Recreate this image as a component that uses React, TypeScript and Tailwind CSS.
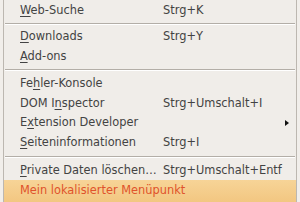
import { ReactNode } from 'react';

type Item =
  | { kind: 'sep'; h: string }
  | { kind: 'item'; label: ReactNode; shortcut?: string; submenu?: boolean; active?: boolean };

const u = (c: string) => <span className="underline underline-offset-[2px]">{c}</span>;

const items: Item[] = [
  { kind: 'item', label: <>{u('W')}eb-Suche</>, shortcut: 'Strg+K' },
  { kind: 'sep', h: 'h-[6px]' },
  { kind: 'item', label: <>{u('D')}ownloads</>, shortcut: 'Strg+Y' },
  { kind: 'item', label: <>{u('A')}dd-ons</> },
  { kind: 'sep', h: 'h-[7px]' },
  { kind: 'item', label: <>Fe{u('h')}ler-Konsole</> },
  { kind: 'item', label: <>DOM I{u('n')}spector</>, shortcut: 'Strg+Umschalt+I' },
  { kind: 'item', label: <>E{u('x')}tension Developer</>, submenu: true },
  { kind: 'item', label: <>{u('S')}eiteninformationen</>, shortcut: 'Strg+I' },
  { kind: 'sep', h: 'h-[8px]' },
  { kind: 'item', label: <>{u('P')}rivate Daten löschen…</>, shortcut: 'Strg+Umschalt+Entf' },
  { kind: 'item', label: 'Mein lokalisierter Menüpunkt', active: true },
];

function Row({ item }: { item: Extract<Item, { kind: 'item' }> }) {
  return (
    <div
      className={
        'flex items-center pl-[16px] pr-[4px] ' +
        (item.active
          ? 'h-[23px] pb-[2px] bg-gradient-to-b from-[#f7d497] to-[#f2c680] text-[#e0532b]'
          : 'h-[19.8px] text-[#434343]')
      }
    >
      <span className="w-[143px] whitespace-nowrap">{item.label}</span>
      <span className="flex-1 whitespace-nowrap">{item.shortcut}</span>
      {item.submenu && (
        <svg width="4" height="6" viewBox="0 0 4 6" className="mr-[3px]">
          <path d="M0 0 L4 3 L0 6 Z" fill="#111" />
        </svg>
      )}
    </div>
  );
}

export default function App() {
  return (
    <div
      className="w-[300px] h-[202px] overflow-hidden bg-[#f1eeea] text-[11.4px]"
      style={{ fontFamily: '"DejaVu Sans", sans-serif' }}
    >
      <div className="ml-[3px] w-[294px] h-full border-x border-[#bcb7b0] bg-[#f0ede9] pt-[1px]">
        {items.map((item, i) =>
          item.kind === 'sep' ? (
            <div key={i} className={'flex items-center px-[1px] ' + item.h}>
              <div className="w-full border-t border-[#b3aea7] border-b-white border-b" />
            </div>
          ) : (
            <Row key={i} item={item} />
          )
        )}
      </div>
    </div>
  );
}
